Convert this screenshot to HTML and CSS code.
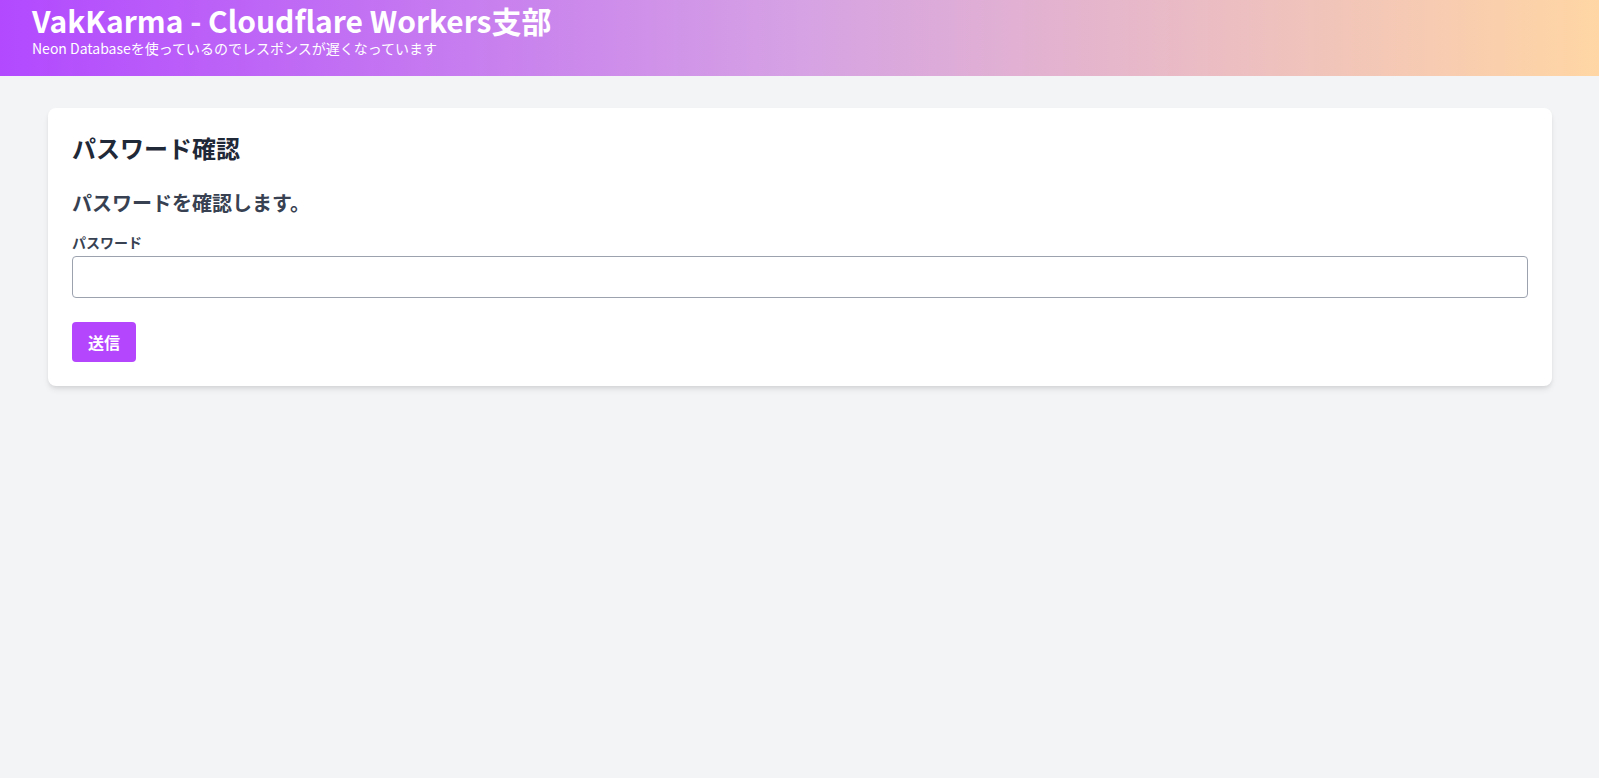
FILE: index.html
```html
<!DOCTYPE html>
<html lang="ja">
<head>
<meta charset="utf-8">
<title>パスワード確認</title>
<link rel="stylesheet" href="styles.css">
</head>
<body>
<header class="site-header">
  <h1 class="site-title">VakKarma - Cloudflare Workers支部</h1>
  <p class="site-sub">Neon Databaseを使っているのでレスポンスが遅くなっています</p>
</header>
<main class="container">
  <section class="card">
    <h2 class="card-title">パスワード確認</h2>
    <form class="form">
      <h3 class="form-lead">パスワードを確認します。</h3>
      <label class="field-label" for="pw">パスワード</label>
      <input class="field-input" id="pw" type="password">
      <button class="btn" type="button">送信</button>
    </form>
  </section>
</main>
</body>
</html>
```

FILE: styles.css
```css
* { box-sizing: border-box; }
html, body { margin: 0; padding: 0; }
body {
  background: #f3f4f6;
  font-family: "Noto Sans CJK JP", "Noto Sans", sans-serif;
  color: #1f2937;
  min-height: 778px;
}
.site-header {
  height: 76px;
  padding: 2px 32px 0;
  background: linear-gradient(to right, #b249ff 0%, #d6a2e4 50%, #ffd6a4 100%);
  color: #ffffff;
}
.site-title {
  margin: 0;
  font-size: 30px;
  line-height: 36px;
  font-weight: 700;
}
.site-sub {
  margin: 0;
  font-size: 14px;
  line-height: 20px;
  font-weight: 400;
  color: #ffffff;
}
.container {
  padding: 32px 47px 32px 48px;
}
.card {
  background: #ffffff;
  border-radius: 8px;
  box-shadow: 0 4px 6px -1px rgba(0,0,0,0.1), 0 2px 4px -1px rgba(0,0,0,0.06);
  padding: 24px;
}
.card-title {
  margin: 0 0 25px;
  font-size: 24px;
  line-height: 32px;
  font-weight: 700;
  color: #1f2937;
}
.form {
  display: flex;
  flex-direction: column;
  align-items: flex-start;
}
.form-lead {
  margin: 0 0 15px;
  font-size: 20px;
  line-height: 28px;
  font-weight: 700;
  color: #374151;
}
.field-label {
  font-size: 14px;
  line-height: 20px;
  font-weight: 700;
  color: #374151;
  margin-bottom: 4px;
}
.field-input {
  width: 100%;
  height: 42px;
  border: 1px solid #9ca3af;
  border-radius: 4px;
  padding: 8px 12px;
  font: inherit;
  margin: 0 0 24px;
  background: #fff;
}
.btn {
  height: 40px;
  padding: 0 16px;
  border: none;
  border-radius: 4px;
  background: #b447fd;
  color: #ffffff;
  font-family: inherit;
  font-size: 16px;
  font-weight: 700;
  line-height: 24px;
  cursor: pointer;
}
```
